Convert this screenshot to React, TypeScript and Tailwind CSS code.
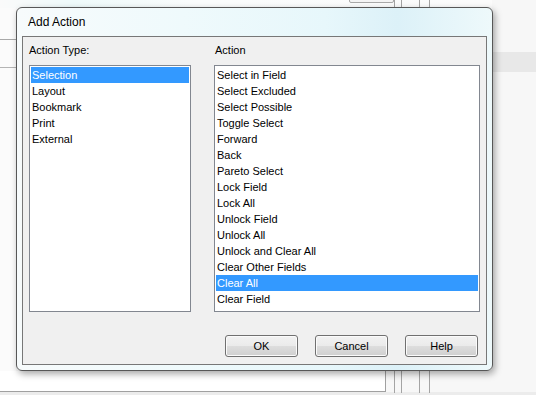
import React from 'react'

// Win7-style "Add Action" dialog over a partly visible app window.
const actionTypes = ['Selection', 'Layout', 'Bookmark', 'Print', 'External']

const actions = [
  'Select in Field',
  'Select Excluded',
  'Select Possible',
  'Toggle Select',
  'Forward',
  'Back',
  'Pareto Select',
  'Lock Field',
  'Lock All',
  'Unlock Field',
  'Unlock All',
  'Unlock and Clear All',
  'Clear Other Fields',
  'Clear All',
  'Clear Field',
]

interface ListBoxProps {
  items: string[]
  selected: number
  className: string
}

function ListBox({ items, selected, className }: ListBoxProps) {
  return (
    <div className={`h-[247px] border border-[#828790] bg-white p-px ${className}`}>
      {items.map((item, i) => (
        <div
          key={item}
          className={`h-[16px] leading-[16px] pl-px whitespace-nowrap ${
            i === selected ? 'bg-[#3399ff] text-white' : 'text-black'
          }`}
        >
          {item}
        </div>
      ))}
    </div>
  )
}

function Button({ label }: { label: string }) {
  return (
    <button className="w-[73px] h-[22px] rounded-[3px] border border-[#707070] bg-[linear-gradient(to_bottom,#f2f2f2_0%,#ebebeb_48%,#dddddd_52%,#cfcfcf_100%)] shadow-[inset_0_0_0_1px_#fbfbfb] text-[11px] leading-[20px] text-black">
      {label}
    </button>
  )
}

export default function App() {
  return (
    <div className="relative w-[536px] h-[395px] overflow-hidden bg-[#f7f7f7] font-['Liberation_Sans',Arial,sans-serif] text-[11px] text-black">
      {/* app window behind the dialog */}
      <div className="absolute left-0 top-0 w-[492px] h-[8px] bg-[linear-gradient(90deg,#fafafa_0%,#eefafa_15%,#fafcfc_40%,#fbfbfb_100%)]" />
      <div className="absolute left-[349px] top-[-4px] w-[45px] h-[7px] rounded-[2px] border border-[#a9a9a9] bg-[#f4f4f4]" />
      <div className="absolute left-0 top-[8px] w-[16px] h-[363px] bg-[#fbfbfb]" />
      <div className="absolute left-0 top-[39px] w-[16px] h-px bg-[#a8a8a8]" />
      <div className="absolute left-0 top-[67px] w-[16px] h-px bg-[#b4b4b4]" />
      <div className="absolute left-[493px] top-[52px] w-[43px] h-[20px] bg-[#e8e8e8]" />
      <div className="absolute left-0 top-[371px] w-[386px] h-[21px] border-r border-b border-[#a0a0a0] bg-white" />
      <div className="absolute left-0 top-[392px] w-[536px] h-[3px] bg-[#ececec]" />
      {[394, 401, 419, 429].map((x) => (
        <React.Fragment key={x}>
          <div className="absolute top-0 w-px h-[8px] bg-[#a4a4a4]" style={{ left: x }} />
          <div className="absolute top-[371px] w-px h-[22px] bg-[#a4a4a4]" style={{ left: x }} />
        </React.Fragment>
      ))}

      {/* dialog */}
      <div className="absolute left-[16px] top-[7px] w-[477px] h-[364px] flex flex-col rounded-[6px] border border-[#575757] bg-[linear-gradient(90deg,#f7fbfc_0%,#effafc_35%,#e7f7fb_65%,#dcf1f8_80%,#eef9fb_100%)] pl-[5px] pr-[5px] pb-[5px] shadow-[2px_3px_7px_rgba(0,0,0,0.35)]">
        <div className="h-[28px] flex items-center pl-[6px] text-[12px] text-black">Add Action</div>
        <div className="flex-1 flex flex-col border border-[#777777] bg-[#f0f0f0] pt-[7px] pl-[6px] pr-[5px]">
          <div className="flex gap-[23px]">
            <div className="w-[162px] flex flex-col">
              <div className="h-[13px] leading-[13px] mb-[8px]">Action Type:</div>
              <ListBox items={actionTypes} selected={0} className="w-[162px]" />
            </div>
            <div className="w-[266px] flex flex-col">
              <div className="h-[13px] leading-[13px] mb-[8px] pl-px">Action</div>
              <ListBox items={actions} selected={13} className="w-[266px]" />
            </div>
          </div>
          <div className="flex justify-end gap-[17px] mt-[23px] pr-[3px]">
            <Button label="OK" />
            <Button label="Cancel" />
            <Button label="Help" />
          </div>
        </div>
      </div>
    </div>
  )
}
